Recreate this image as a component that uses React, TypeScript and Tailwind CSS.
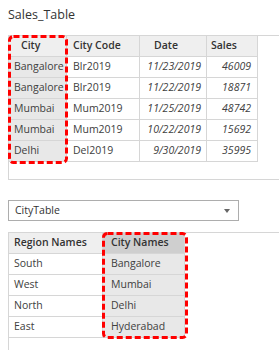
const salesRows = [
  { city: "Bangalore", code: "Blr2019", date: "11/23/2019", sales: "46009" },
  { city: "Bangalore", code: "Blr2019", date: "11/22/2019", sales: "18871" },
  { city: "Mumbai", code: "Mum2019", date: "11/25/2019", sales: "48742" },
  { city: "Mumbai", code: "Mum2019", date: "10/22/2019", sales: "15692" },
  { city: "Delhi", code: "Del2019", date: "9/30/2019", sales: "35995" },
];

const cityRows = [
  { region: "South", city: "Bangalore" },
  { region: "West", city: "Mumbai" },
  { region: "North", city: "Delhi" },
  { region: "East", city: "Hyderabad" },
];

const cell = "h-[21px] flex items-center border-r border-b border-[#d6d6d6] whitespace-nowrap overflow-hidden";

const DashedBox = ({ w, h, className }: { w: number; h: number; className: string }) => (
  <svg
    width={w}
    height={h}
    className={"absolute pointer-events-none " + className}
  >
    <rect
      x={1.5}
      y={1.5}
      width={w - 3}
      height={h - 3}
      rx={4}
      fill="none"
      stroke="#ff0000"
      strokeWidth={3}
      strokeDasharray="6 3"
    />
  </svg>
);

export default function App() {
  return (
    <div
      className="w-[279px] h-[350px] overflow-hidden bg-white text-[#404040] text-[10.5px]"
      style={{ fontFamily: '"Open Sans", "Noto Sans", sans-serif' }}
    >
      <div className="h-[35px] pl-2 pt-[6px] text-[12.5px] text-[#333]">Sales_Table</div>

      {/* sales table panel */}
      <div className="ml-2 h-[145px] border-l border-t border-b border-[#d6d6d6]">
        <div className="relative w-fit">
          <div className="grid grid-cols-[58px_73px_67px_51px]">
            <div className={cell + " bg-[#efefef] pl-3 font-semibold text-[#333]"}>City</div>
            <div className={cell + " bg-[#efefef] pl-[6px] font-semibold text-[#333]"}>City Code</div>
            <div className={cell + " bg-[#efefef] pl-[14px] font-semibold text-[#333]"}>Date</div>
            <div className={cell + " bg-[#efefef] pl-1 font-semibold text-[#333]"}>Sales</div>
            {salesRows.map((r, i) => (
              <div key={i} className="contents">
                <div className={cell + " bg-[#e8e8e8] pl-[5px]"}>{r.city}</div>
                <div className={cell + " pl-[6px]"}>{r.code}</div>
                <div className={cell + " justify-end pr-[5px] italic"}>{r.date}</div>
                <div className={cell + " justify-end pr-[6px] italic"}>{r.sales}</div>
              </div>
            ))}
          </div>
          <DashedBox w={60} h={129} className="-left-[1px] -top-[1px]" />
        </div>
      </div>

      {/* table selector */}
      <div className="ml-2 mt-[20px] w-[231px] h-[21px] border border-[#adadad] flex items-center justify-between pl-[6px] pr-[8px] text-[#333]">
        <span>CityTable</span>
        <svg width="6" height="4" viewBox="0 0 6 4">
          <path d="M0 0h6L3 4z" fill="#666" />
        </svg>
      </div>

      {/* city table panel */}
      <div className="ml-2 mt-[11px] h-[200px] border-l border-t border-[#d6d6d6]">
        <div className="relative w-fit">
          <div className="grid grid-cols-[94px_82px]">
            <div className={cell + " bg-[#efefef] pl-[5px] font-semibold text-[#333]"}>Region Names</div>
            <div className={cell + " bg-[#cfcfcf] pl-[8px] font-semibold text-[#333]"}>City Names</div>
            {cityRows.map((r, i) => (
              <div key={i} className="contents">
                <div className={cell + " pl-[5px]"}>{r.region}</div>
                <div className={cell + " bg-[#e8e8e8] pl-[8px]"}>{r.city}</div>
              </div>
            ))}
          </div>
          <DashedBox w={86} h={107} className="left-[93px] -top-[1px]" />
        </div>
      </div>
    </div>
  );
}
